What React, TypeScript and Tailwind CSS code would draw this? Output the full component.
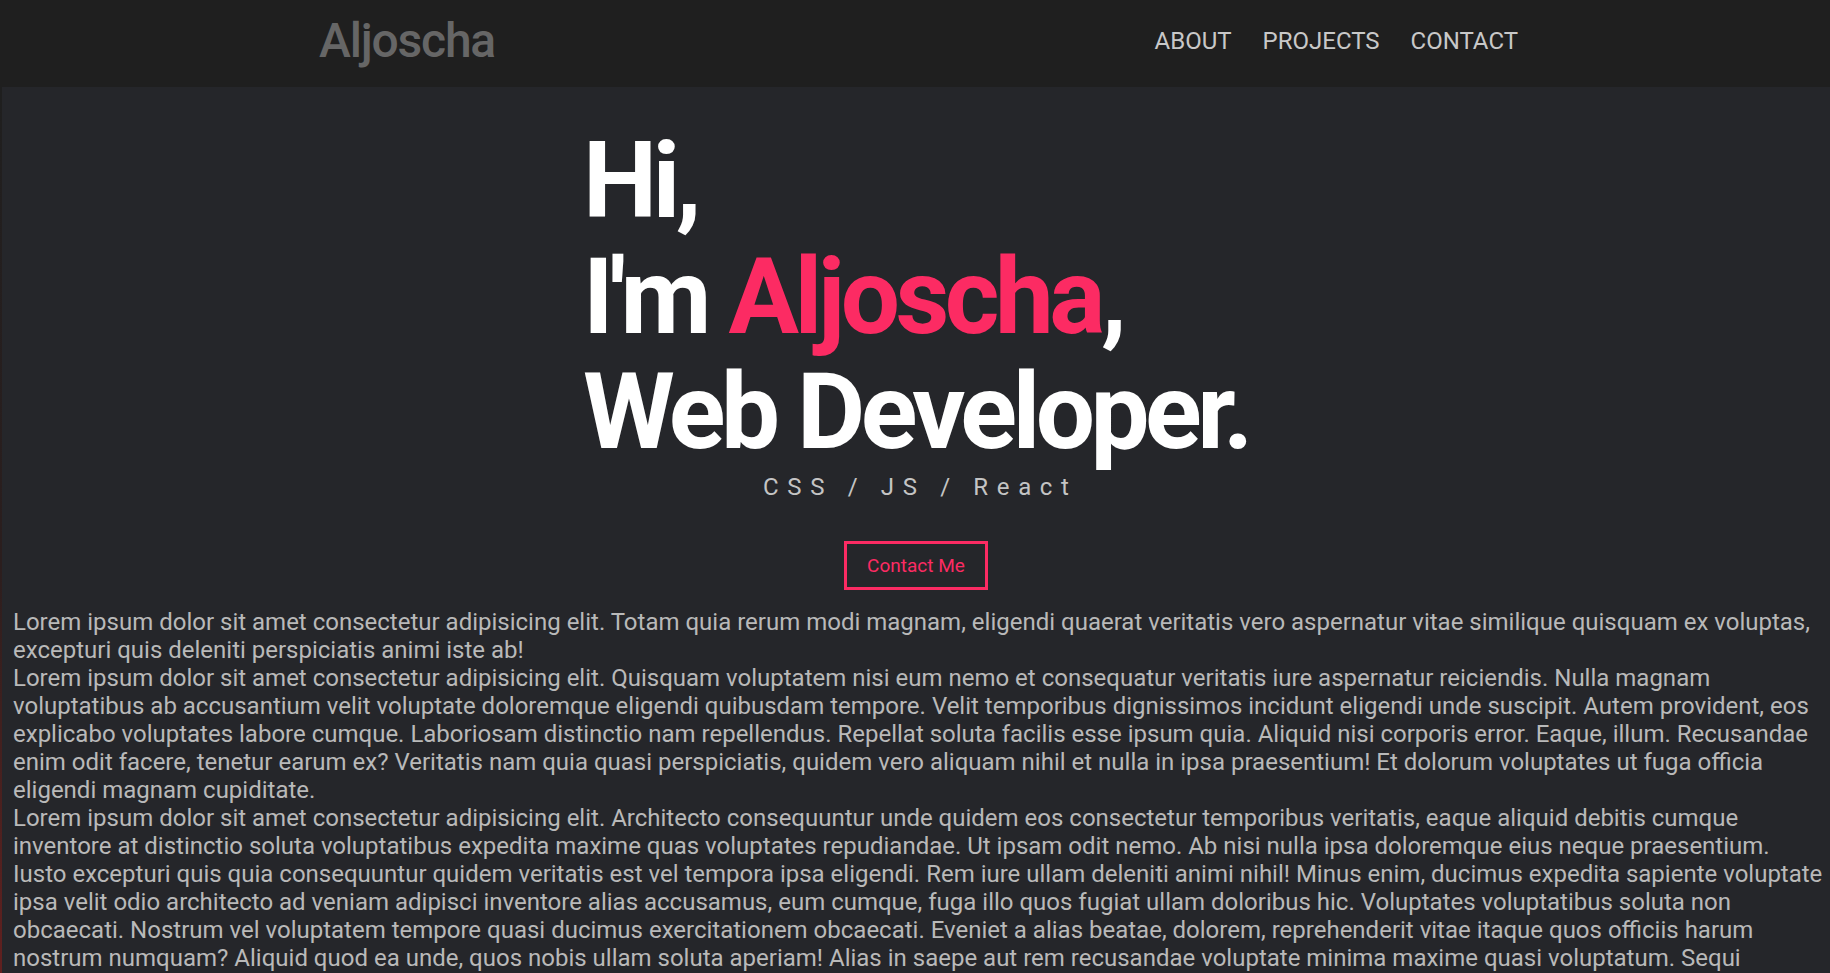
const p1 =
  'Lorem ipsum dolor sit amet consectetur adipisicing elit. Totam quia rerum modi magnam, eligendi quaerat veritatis vero aspernatur vitae similique quisquam ex voluptas, excepturi quis deleniti perspiciatis animi iste ab!'

const p2 =
  'Lorem ipsum dolor sit amet consectetur adipisicing elit. Quisquam voluptatem nisi eum nemo et consequatur veritatis iure aspernatur reiciendis. Nulla magnam voluptatibus ab accusantium velit voluptate doloremque eligendi quibusdam tempore. Velit temporibus dignissimos incidunt eligendi unde suscipit. Autem provident, eos explicabo voluptates labore cumque. Laboriosam distinctio nam repellendus. Repellat soluta facilis esse ipsum quia. Aliquid nisi corporis error. Eaque, illum. Recusandae enim odit facere, tenetur earum ex? Veritatis nam quia quasi perspiciatis, quidem vero aliquam nihil et nulla in ipsa praesentium! Et dolorum voluptates ut fuga officia eligendi magnam cupiditate.'

const p3 =
  'Lorem ipsum dolor sit amet consectetur adipisicing elit. Architecto consequuntur unde quidem eos consectetur temporibus veritatis, eaque aliquid debitis cumque inventore at distinctio soluta voluptatibus expedita maxime quas voluptates repudiandae. Ut ipsam odit nemo. Ab nisi nulla ipsa doloremque eius neque praesentium. Iusto excepturi quis quia consequuntur quidem veritatis est vel tempora ipsa eligendi. Rem iure ullam deleniti animi nihil! Minus enim, ducimus expedita sapiente voluptate ipsa velit odio architecto ad veniam adipisci inventore alias accusamus, eum cumque, fuga illo quos fugiat ullam doloribus hic. Voluptates voluptatibus soluta non obcaecati. Nostrum vel voluptatem tempore quasi ducimus exercitationem obcaecati. Eveniet a alias beatae, dolorem, reprehenderit vitae itaque quos officiis harum nostrum numquam? Aliquid quod ea unde, quos nobis ullam soluta aperiam! Alias in saepe aut rem recusandae voluptate minima maxime quasi voluptatum. Sequi nesciunt quibusdam, quae laudantium ab impedit ipsum dolores commodi, nemo vel iste minus magni?'

const navItems = ['ABOUT', 'PROJECTS', 'CONTACT']

function Header() {
  return (
    <header className="h-[87px] bg-[#1f1f1f] flex items-center">
      <div className="w-full flex items-center justify-between pl-[319px] pr-[312px]">
        <a className="text-[48px] font-medium tracking-tight text-[#666666] leading-none -mt-[6px]">Aljoscha</a>
        <nav className="flex gap-[31px] text-[24px] text-[#c8c8c8] leading-none -mt-[6px]">
          {navItems.map((item) => (
            <a key={item}>{item}</a>
          ))}
        </nav>
      </div>
    </header>
  )
}

function Hero() {
  return (
    <section className="flex flex-col items-center pt-[37px]">
      <h1 className="text-[105px] leading-[1.1] font-bold text-white tracking-[-0.043em]">
        Hi,
        <br />
        I'm <span className="text-[#fc2b63]">Aljoscha</span>,
        <br />
        Web Developer.
      </h1>
      <p className="mt-[2px] text-[24px] leading-[28px] tracking-[0.36em] text-[#c4c4c4] pl-[0.36em]">
        CSS / JS / React
      </p>
      <button className="mt-[40px] border-[3px] border-[#fc2b63] px-5 py-2.5 text-[19px] leading-[23px] text-[#fc2b63]">
        Contact Me
      </button>
    </section>
  )
}

export default function App() {
  return (
    <div className="min-h-screen bg-[#1f1f1f] font-['Roboto',_'Liberation_Sans',_sans-serif]">
      <Header />
      <div className="bg-linear-to-b from-[#1f1f1f] via-[#2b1e1e] to-[#6a1f1f] min-h-[886px]">
        <main className="ml-[2px] bg-[#25262a] min-h-[886px] pb-10">
          <Hero />
          <div className="mt-[18px] pl-[11px] pr-[5px] text-[24px] leading-[28px] text-[#b9b9b9]">
            <p>{p1}</p>
            <p>{p2}</p>
            <p>{p3}</p>
          </div>
        </main>
      </div>
    </div>
  )
}
